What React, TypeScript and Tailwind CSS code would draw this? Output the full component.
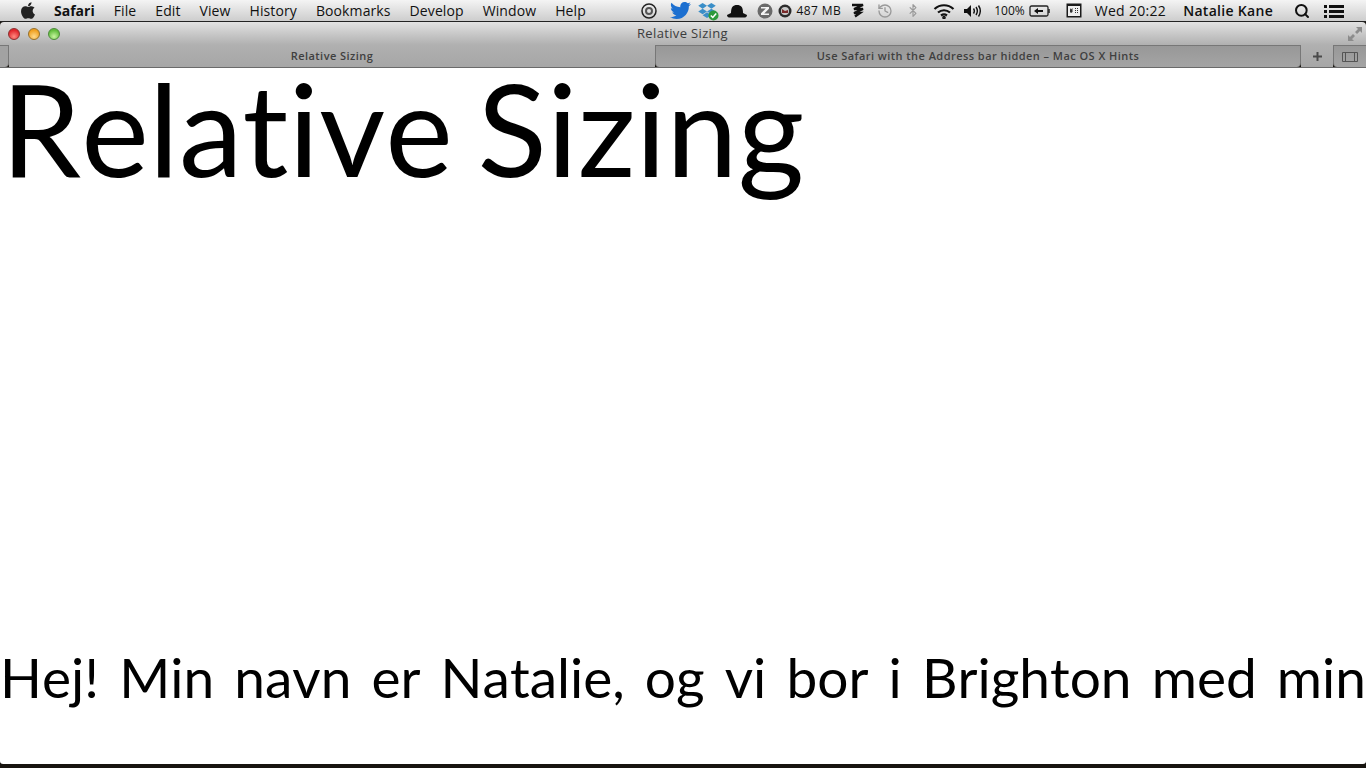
import { FaApple, FaDropbox, FaTwitter } from 'react-icons/fa';
import { Bluetooth, History, Search } from 'lucide-react';

const menus = ['File', 'Edit', 'View', 'History', 'Bookmarks', 'Develop', 'Window', 'Help'];

function HatIcon() {
  return (
    <svg width="22" height="14" viewBox="0 0 22 14">
      <path d="M5 9C5 3 7 1 11 1s6 2 6 8l4 2c0 1.500-1 2.500-2 2.500H3c-1 0-2-1-2-2.500z" fill="#111" />
    </svg>
  );
}

function WifiIcon() {
  return (
    <svg width="22" height="16" viewBox="0 0 22 16" fill="none" stroke="#111" strokeWidth="2.200">
      <path d="M1.500 6C7 1 15 1 20.500 6" />
      <path d="M5 9.500c3.500-3 8.500-3 12 0" />
      <path d="M8 12.500c1.800-1.300 4.200-1.300 6 0" />
      <circle cx="11" cy="14.500" r="0.700" fill="#111" />
    </svg>
  );
}

function SpeakerIcon() {
  return (
    <svg width="18" height="14" viewBox="0 0 18 14" fill="none">
      <path d="M1 5h3l4-4v12l-4-4H1z" fill="#111" />
      <path d="M10.500 4.500c1 1.500 1 3.500 0 5M13 3c1.700 2.500 1.700 5.500 0 8M15.500 1.500c2.300 3.500 2.300 7.500 0 11" stroke="#111" strokeWidth="1.400" />
    </svg>
  );
}

function BatteryIcon() {
  return (
    <svg width="22" height="12" viewBox="0 0 22 12" fill="none">
      <rect x="1" y="1" width="18" height="10" rx="1.500" stroke="#222" strokeWidth="1.300" />
      <path d="M20 4v4" stroke="#222" strokeWidth="1.500" />
      <path d="M5 6l4-3v2h5v2H9v2z" fill="#111" />
    </svg>
  );
}

function CalendarIcon() {
  return (
    <svg width="16" height="15" viewBox="0 0 16 15">
      <rect x="0.500" y="0.500" width="15" height="14" fill="#1a1a1a" />
      <rect x="2" y="3" width="12" height="10" fill="#eee" />
      <path d="M4 5l1 1.500L6.500 5v4L5 10 4 9zM9 5h1v1H9zM11 5h1v1h-1zM9 7h1v1H9zM11 7h1v1h-1zM9 9h1v1H9zM11 9h1v1h-1z" fill="#333" />
    </svg>
  );
}

function ListIcon() {
  return (
    <svg width="20" height="14" viewBox="0 0 20 14" fill="#111">
      <rect x="0" y="1" width="3" height="3" />
      <rect x="5" y="1" width="15" height="3" />
      <rect x="0" y="6" width="3" height="3" />
      <rect x="5" y="6" width="15" height="3" />
      <rect x="0" y="11" width="3" height="3" />
      <rect x="5" y="11" width="15" height="3" />
    </svg>
  );
}

function GearDot() {
  return (
    <svg width="16" height="16" viewBox="0 0 16 16" fill="none" stroke="#222">
      <circle cx="8" cy="8" r="7" strokeWidth="1.500" />
      <circle cx="8" cy="8" r="3" strokeWidth="2" stroke="#555" />
    </svg>
  );
}

function ZIcon() {
  return (
    <svg width="16" height="16" viewBox="0 0 16 16">
      <circle cx="8" cy="8" r="7.500" fill="#6a6a6a" />
      <path d="M4 4h8v1.800L7.200 10.500H12V12H4v-1.800L8.800 5.500H4z" fill="#f4f4f4" />
    </svg>
  );
}

function GaugeIcon() {
  return (
    <svg width="14" height="14" viewBox="0 0 14 14">
      <circle cx="7" cy="7" r="6.500" fill="#2b2b2b" />
      <circle cx="7" cy="7" r="4" fill="#c9c9c9" />
      <path d="M4 5l3 2 3-1v3H4z" fill="#7a2a2a" />
    </svg>
  );
}

function BoltIcon() {
  return (
    <svg width="14" height="15" viewBox="0 0 14 15" fill="none" stroke="#111" strokeWidth="2.400">
      <path d="M1 2h11L3 6h9L3 10h6L4 13.500" />
    </svg>
  );
}

function DropboxBadge() {
  return (
    <span className="relative ml-[6px] w-[20px] h-[18px]">
      <FaDropbox className="w-[18px] h-[17px] text-[#3a8ec8]" />
      <svg className="absolute right-[-1px] bottom-[-1px]" width="11" height="11" viewBox="0 0 11 11">
        <circle cx="5.500" cy="5.500" r="5" fill="#2c9a3c" />
        <path d="M2.800 5.500l2 2 3.400-4" fill="none" stroke="#fff" strokeWidth="1.500" />
      </svg>
    </span>
  );
}

function Traffic({ tone }: { tone: 'red' | 'amber' | 'green' }) {
  if (tone === 'red') {
    return <span className="w-3 h-3 rounded-full border border-[#8a3030] bg-[radial-gradient(circle_at_50%_75%,#ff8a80,#e0252b_70%)]" />;
  }
  if (tone === 'amber') {
    return <span className="w-3 h-3 rounded-full border border-[#96702a] bg-[radial-gradient(circle_at_50%_75%,#ffd98a,#f0a020_70%)]" />;
  }
  return <span className="w-3 h-3 rounded-full border border-[#4c8a3a] bg-[radial-gradient(circle_at_50%_75%,#c8f5a0,#62bd3c_70%)]" />;
}

export default function App() {
  return (
    <div className="w-[1366px] h-[768px] overflow-hidden bg-[#17140f] flex flex-col font-['Open_Sans',sans-serif]">
      {/* menu bar */}
      <div className="h-[22px] shrink-0 flex items-center text-[14px] text-[#111] border-b border-[#222] bg-gradient-to-b from-[#f4f4f4] to-[#cdcdcd]">
        <FaApple className="ml-[19px] w-[18px] h-[19px] text-[#222]" />
        <span className="ml-[17px] font-bold">Safari</span>
        <div className="ml-[19px] flex gap-[19px] tracking-[0.1px]">
          {menus.map((m) => (
            <span key={m}>{m}</span>
          ))}
        </div>
        <div className="ml-auto flex items-center pr-[22px]">
          <GearDot />
          <FaTwitter className="ml-[12px] w-[23px] h-[21px] text-[#1c6fd0]" />
          <DropboxBadge />
          <span className="ml-[8px]"><HatIcon /></span>
          <span className="ml-[9px]"><ZIcon /></span>
          <span className="ml-[5px]"><GaugeIcon /></span>
          <span className="ml-[5px] text-[12px] tracking-[0.4px]">487 MB</span>
          <span className="ml-[10px]"><BoltIcon /></span>
          <History className="ml-[12px] w-[16px] h-[16px] text-[#999]" />
          <Bluetooth className="ml-[13px] w-[14px] h-[15px] text-[#999]" />
          <span className="ml-[13px]"><WifiIcon /></span>
          <span className="ml-[8px]"><SpeakerIcon /></span>
          <span className="ml-[13px] text-[12px]">100%</span>
          <span className="ml-[4px]"><BatteryIcon /></span>
          <span className="ml-[15px]"><CalendarIcon /></span>
          <span className="ml-[13px] tracking-[0.3px]">Wed 20:22</span>
          <span className="ml-[17px] font-semibold tracking-[0.3px]">Natalie Kane</span>
          <Search className="ml-[21px] w-[16px] h-[16px] text-[#111]" strokeWidth={3} />
          <span className="ml-[14px]"><ListIcon /></span>
        </div>
      </div>

      {/* safari window */}
      <div className="flex-1 mb-[4px] flex flex-col overflow-hidden rounded-t-[4px] rounded-b-[3px]">
        <div className="h-[23px] shrink-0 flex items-center bg-gradient-to-b from-[#e2e2e2] to-[#b0b0b0]">
          <div className="pl-[8px] flex gap-[8px]">
            <Traffic tone="red" />
            <Traffic tone="amber" />
            <Traffic tone="green" />
          </div>
          <span className="ml-[577px] text-[13px] tracking-[0.35px] text-[#3c3c3c]">Relative Sizing</span>
          <svg className="ml-auto mr-[3px]" width="16" height="16" viewBox="0 0 16 16" fill="#8c8c8c">
            <path d="M1 15V9l2 2 3-3 2 2-3 3 2 2zM15 1v6l-2-2-3 3-2-2 3-3-2-2z" />
          </svg>
        </div>

        <div className="h-[23px] shrink-0 flex text-[11px] font-semibold tracking-[0.45px] text-[#3f3f3f] border-b border-[#6a6a6a]">
          <div className="w-[9px] bg-[#a2a2a2] border-t border-r border-[#777] rounded-br-[4px]" />
          <div className="w-[646px] flex items-center justify-center bg-gradient-to-b from-[#b0b0b0] to-[#a6a6a6]">
            Relative Sizing
          </div>
          <div className="w-[646px] flex items-center justify-center bg-gradient-to-b from-[#989898] to-[#a4a4a4] border-t border-x border-[#777] rounded-bl-[4px] rounded-br-[4px]">
            Use Safari with the Address bar hidden – Mac OS X Hints
          </div>
          <div className="w-[32px] flex items-center justify-center bg-gradient-to-b from-[#b0b0b0] to-[#a6a6a6]">
            <svg width="9" height="9" viewBox="0 0 9 9" fill="#4a4a4a">
              <path d="M3.500 0h2v3.500H9v2H5.500V9h-2V5.500H0v-2h3.500z" />
            </svg>
          </div>
          <div className="flex-1 flex items-center justify-center bg-gradient-to-b from-[#989898] to-[#a4a4a4] border-t border-l border-[#777] rounded-bl-[4px]">
            <svg width="16" height="10" viewBox="0 0 16 10" fill="none" stroke="#555">
              <path d="M0.500 0.500h15v9H.5zM3.500 .5v9M12.500 .5v9" />
            </svg>
          </div>
        </div>

        {/* page content */}
        <div className="flex-1 bg-white text-black font-['Lato',sans-serif] [font-variant-ligatures:none] [font-kerning:none] flex flex-col justify-between">
          <h1 className="pl-[1px] text-[128px] leading-[120px] font-normal whitespace-nowrap [word-spacing:-8px]">Relative Sizing</h1>
          <p className="mb-[53px] text-[55px] leading-[67px] text-justify [text-align-last:justify] w-[1366px] whitespace-nowrap">
            Hej! Min navn er Natalie, og vi bor i Brighton med min
          </p>
        </div>
      </div>
    </div>
  );
}
